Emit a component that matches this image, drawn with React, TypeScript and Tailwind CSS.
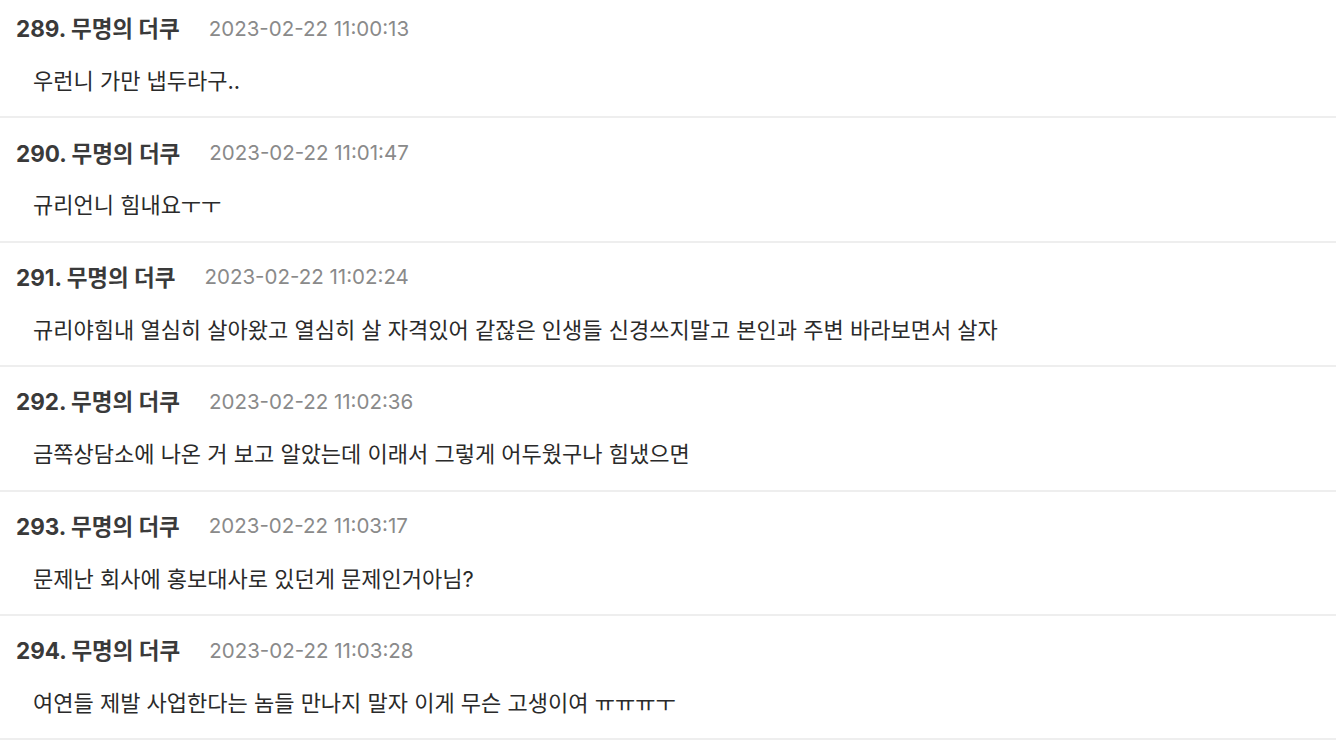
const comments = [
  { no: 289, date: "2023-02-22 11:00:13", text: "우런니 가만 냅두라구.." },
  { no: 290, date: "2023-02-22 11:01:47", text: "규리언니 힘내요ㅜㅜ" },
  {
    no: 291,
    date: "2023-02-22 11:02:24",
    text: "규리야힘내 열심히 살아왔고 열심히 살 자격있어 같잖은 인생들 신경쓰지말고 본인과 주변 바라보면서 살자",
  },
  {
    no: 292,
    date: "2023-02-22 11:02:36",
    text: "금쪽상담소에 나온 거 보고 알았는데 이래서 그렇게 어두웠구나 힘냈으면",
  },
  { no: 293, date: "2023-02-22 11:03:17", text: "문제난 회사에 홍보대사로 있던게 문제인거아님?" },
  {
    no: 294,
    date: "2023-02-22 11:03:28",
    text: "여연들 제발 사업한다는 놈들 만나지 말자 이게 무슨 고생이여 ㅠㅠㅠㅜ",
  },
];

const App = () => {
  return (
    <div
      className="w-[1336px] h-[740px] overflow-hidden bg-white"
      style={{ fontFamily: 'Inter, "Noto Sans CJK KR", sans-serif' }}
    >
      <div className="-mt-[6px]">
        {comments.map((c) => (
          <div key={c.no} className="h-[124.4px] border-b-2 border-[#eeeeee] pt-[21px]">
            <div className="flex items-center h-[28px] pl-[16px] whitespace-nowrap">
              <span className="text-[22.5px] font-bold text-[#3a3a3a]">
                {c.no}. 무명의 더쿠
              </span>
              <span className="ml-[29px] text-[20.5px] text-[#8a8a8a]">{c.date}</span>
            </div>
            <p className="mt-[24px] h-[28px] leading-[28px] pl-[33px] text-[22px] text-[#2a2a2a] whitespace-nowrap">
              {c.text}
            </p>
          </div>
        ))}
      </div>
    </div>
  );
};

export default App;
